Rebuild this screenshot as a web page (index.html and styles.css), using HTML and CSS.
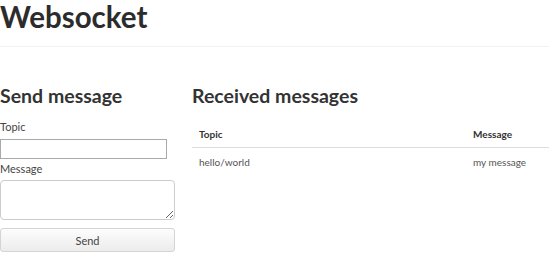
FILE: index.html
```html
<!DOCTYPE html>
<html lang="en">
<head>
    <meta charset="UTF-8">
    <title>Websocket</title>
    <link rel="stylesheet" href="styles.css">
</head>
<body>
    <h1>Websocket</h1>
    <hr>

    <div class="columns">
        <div class="send-col">
            <h2>Send message</h2>
            <form onsubmit="return false">
                <label for="topic">Topic</label>
                <input type="text" id="topic" class="topic-input">
                <label for="message">Message</label>
                <textarea id="message" class="message-input"></textarea>
                <button type="submit" class="send-button">Send</button>
            </form>
        </div>

        <div class="received-col">
            <h2>Received messages</h2>
            <table class="messages">
                <thead>
                    <tr>
                        <th class="col-topic">Topic</th>
                        <th>Message</th>
                    </tr>
                </thead>
                <tbody>
                    <tr>
                        <td class="col-topic">hello/world</td>
                        <td>my message</td>
                    </tr>
                </tbody>
            </table>
        </div>
    </div>
</body>
</html>
```

FILE: styles.css
```css
/* main */
body {
    font-family: 'Lato', 'Open Sans', sans-serif;
    color: #333;
    margin: 0;
    padding: 0;
    background: #fff;
}

h1 {
    font-size: 29.5px;
    font-weight: 700;
    color: #2c2c2c;
    margin: 0;
    padding-top: 1px;
    line-height: 32px;
}

hr {
    border: none;
    border-top: 1px solid #eef3f5;
    margin: 13px 0 0 0;
}

.columns {
    display: flex;
    gap: 16px;
    margin-top: 37px;
}

h2 {
    font-size: 19.5px;
    font-weight: 700;
    color: #333;
    margin: 0;
    line-height: 24px;
}

/* send form */
.send-col {
    width: 176px;
}

label {
    display: block;
    font-size: 11px;
    color: #444;
    line-height: 14px;
}

.send-col h2 {
    margin-bottom: 12px;
}

.topic-input {
    display: block;
    box-sizing: border-box;
    width: 167px;
    height: 20px;
    margin: 5px 0 3px 0;
    border: 1px solid #aaa;
    padding: 0 4px;
    font-family: inherit;
}

.message-input {
    display: block;
    box-sizing: border-box;
    width: 175px;
    height: 40px;
    margin-top: 4px;
    border: 1px solid #ccc;
    border-radius: 4px;
    padding: 3px;
    font-family: inherit;
    font-size: 11px;
}

.send-button {
    display: block;
    box-sizing: border-box;
    width: 175px;
    height: 24px;
    margin-top: 8px;
    background: linear-gradient(to bottom, #fdfdfd, #ececec);
    border: 1px solid #d4d4d4;
    border-radius: 3px;
    font-family: inherit;
    font-size: 11px;
    color: #444;
    cursor: pointer;
}

/* received table */
.received-col {
    flex: 1;
}

.received-col h2 {
    margin-bottom: 12px;
}

.messages {
    width: 100%;
    border-collapse: collapse;
    font-size: 10px;
}

.messages th {
    text-align: left;
    font-weight: 700;
    color: #333;
    padding: 8px 7px 7px;
    border-bottom: 1px solid #ddd;
}

.messages td {
    color: #555;
    padding: 8px 7px;
}

.messages .col-topic {
    width: 260px;
}
```
